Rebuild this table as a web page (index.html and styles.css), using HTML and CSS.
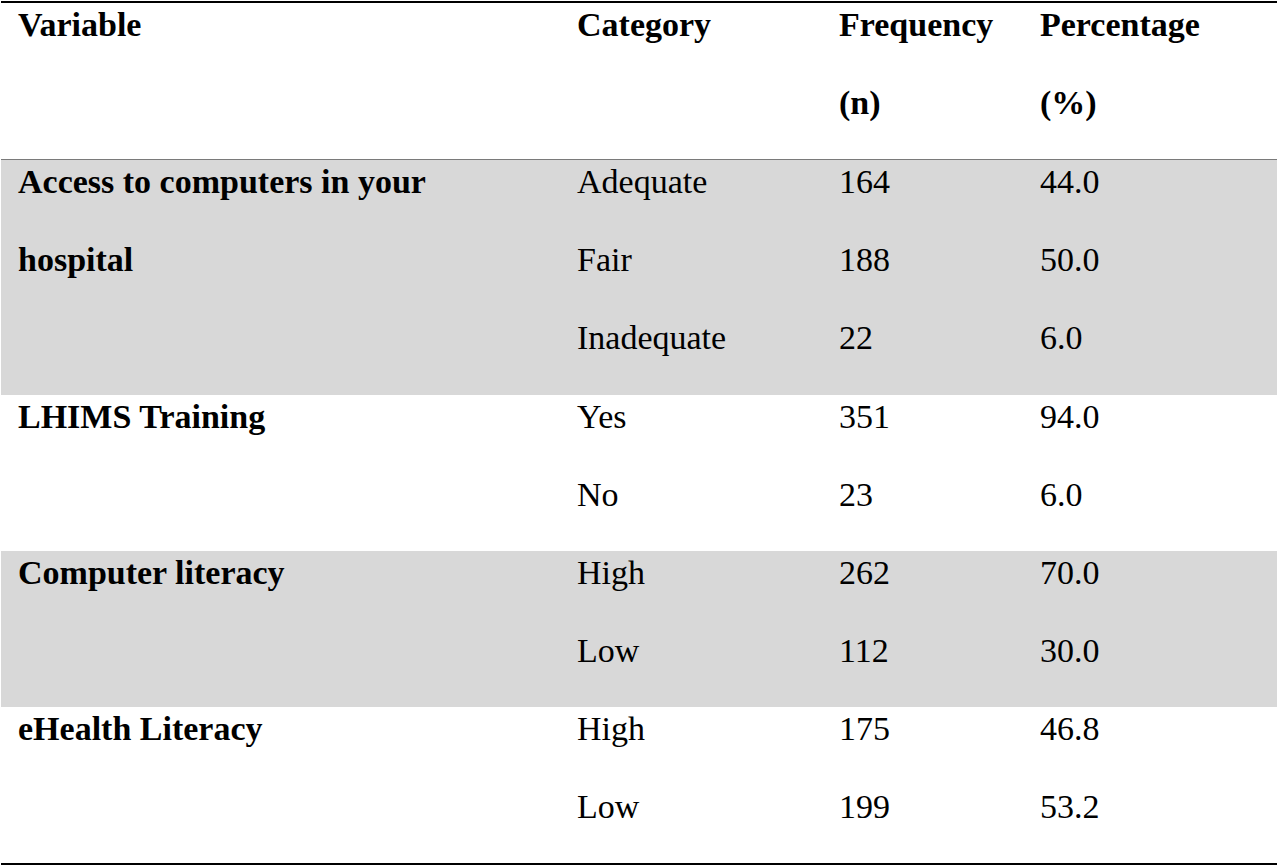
FILE: index.html
```html
<!DOCTYPE html>
<html lang="en">
<head>
<meta charset="utf-8">
<title>Table</title>
<link rel="stylesheet" href="styles.css">
</head>
<body>
<div class="wrap">
<table class="data">
  <colgroup>
    <col class="c1"><col class="c2"><col class="c3"><col class="c4">
  </colgroup>
  <thead>
    <tr>
      <th><div class="t">Variable</div></th>
      <th><div class="t">Category</div></th>
      <th><div class="t">Frequency<br>(n)</div></th>
      <th><div class="t">Percentage<br>(%)</div></th>
    </tr>
  </thead>
  <tbody class="shade">
    <tr>
      <td rowspan="3" class="var"><div class="t">Access to computers in your hospital</div></td>
      <td><div class="t">Adequate</div></td><td><div class="t">164</div></td><td><div class="t">44.0</div></td>
    </tr>
    <tr><td><div class="t">Fair</div></td><td><div class="t">188</div></td><td><div class="t">50.0</div></td></tr>
    <tr class="tall"><td><div class="t">Inadequate</div></td><td><div class="t">22</div></td><td><div class="t">6.0</div></td></tr>
  </tbody>
  <tbody>
    <tr>
      <td rowspan="2" class="var"><div class="t">LHIMS Training</div></td>
      <td><div class="t">Yes</div></td><td><div class="t">351</div></td><td><div class="t">94.0</div></td>
    </tr>
    <tr><td><div class="t">No</div></td><td><div class="t">23</div></td><td><div class="t">6.0</div></td></tr>
  </tbody>
  <tbody class="shade">
    <tr>
      <td rowspan="2" class="var"><div class="t">Computer literacy</div></td>
      <td><div class="t">High</div></td><td><div class="t">262</div></td><td><div class="t">70.0</div></td>
    </tr>
    <tr><td><div class="t">Low</div></td><td><div class="t">112</div></td><td><div class="t">30.0</div></td></tr>
  </tbody>
  <tbody class="last">
    <tr>
      <td rowspan="2" class="var"><div class="t">eHealth Literacy</div></td>
      <td><div class="t">High</div></td><td><div class="t">175</div></td><td><div class="t">46.8</div></td>
    </tr>
    <tr><td><div class="t">Low</div></td><td><div class="t">199</div></td><td><div class="t">53.2</div></td></tr>
  </tbody>
</table>
</div>
</body>
</html>
```
FILE: styles.css
```css
html, body {
  margin: 0;
  padding: 0;
  background: #ffffff;
}

.wrap {
  padding: 1px 3px 0 1px;
}

.data {
  width: 1276px;
  border-collapse: collapse;
  table-layout: fixed;
  font-family: "Liberation Serif", "Times New Roman", serif;
  font-size: 34px;
  color: #000000;
  border-top: 2px solid #000000;
  border-bottom: 2px solid #000000;
}

.c1 { width: 559px; }
.c2 { width: 262px; }
.c3 { width: 201px; }
.c4 { width: 254px; }

.data th,
.data td {
  height: 78px;
  padding: 0 17px;
  line-height: 78px;
  vertical-align: top;
  text-align: left;
}

.data th {
  font-weight: bold;
  border-bottom: 1px solid #7a7a7a;
}

.data .tall td {
  height: 79px;
}

.t {
  margin: -17px 0 17px;
}

.var {
  font-weight: bold;
}

.shade td {
  background: #d8d8d8;
}
```
